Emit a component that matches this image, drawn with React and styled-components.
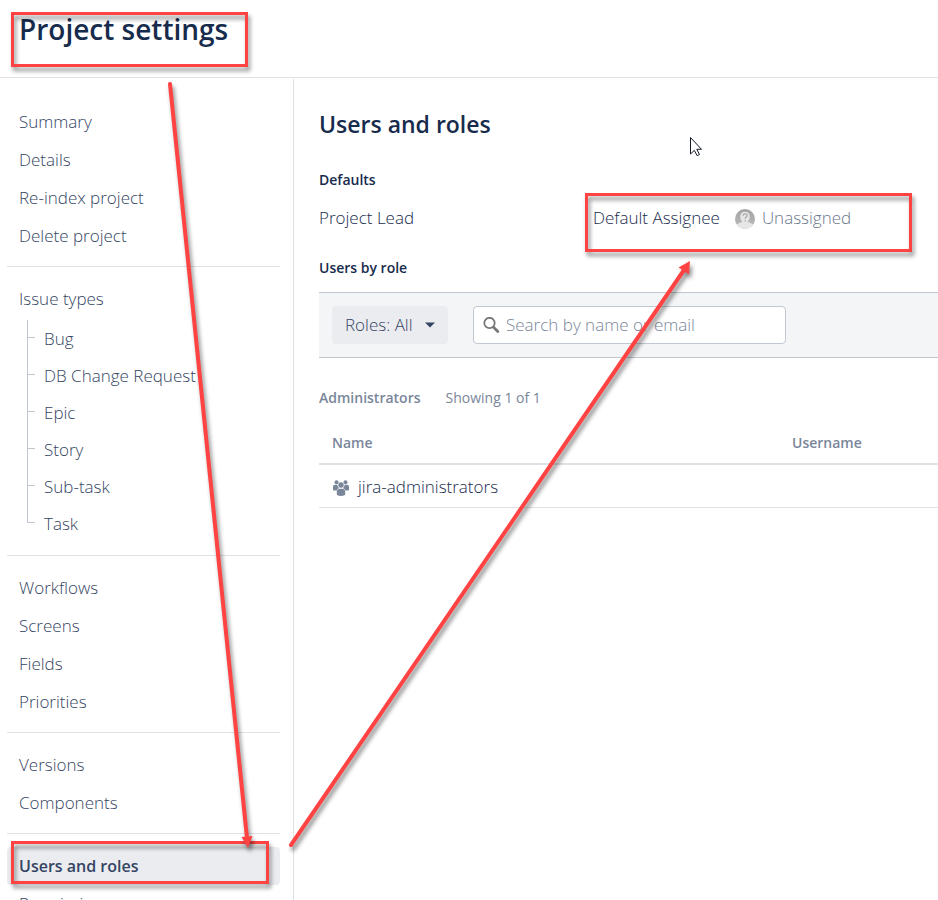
import React from "react";
import styled, { createGlobalStyle } from "styled-components";

const GlobalStyle = createGlobalStyle`
  * {
    box-sizing: border-box;
  }

  body {
    margin: 0;
    background: #fff;
    color: #172b4d;
    font-family: "Open Sans", "Noto Sans", sans-serif;
    font-size: 17px;
    font-weight: 300;
    line-height: 24px;
  }

  ul {
    list-style: none;
    margin: 0;
    padding: 0;
  }
`;

const Page = styled.div`
  display: flex;
  flex-direction: column;
  height: 100vh;
  overflow: hidden;
  position: relative;
`;

const Header = styled.header`
  flex: none;
  height: 78px;
  padding: 9px 19px;
  border-bottom: 1px solid #dfe1e6;
`;

const PageTitle = styled.h1`
  margin: 0;
  font-size: 28px;
  line-height: 40px;
  font-weight: 600;
`;

const Body = styled.div`
  display: flex;
  flex: 1;
  min-height: 0;
  margin-top: 1px;
`;

const Sidebar = styled.nav`
  flex: none;
  width: 294px;
  padding: 11px 13px 0 7px;
  border-right: 1px solid #dfe1e6;
  overflow: hidden;
`;

const NavGroup = styled.ul`
  padding: 13px 0 11px;

  & + & {
    border-top: 1px solid #dfe1e6;
  }
`;

const NavLink = styled.a`
  display: block;
  padding: 0 12px;
  border-radius: 4px;
  line-height: ${(props) => (props.$nested ? "37px" : "38px")};
  color: #344563;
  text-decoration: none;
  white-space: nowrap;
  font-size: ${(props) => (props.$active ? "16px" : "17px")};
  font-weight: ${(props) => (props.$active ? 600 : 300)};
  background: ${(props) => (props.$active ? "#ebecf0" : "transparent")};
`;

const Tree = styled.ul`
  padding: 2px 0 2px 20px;
`;

const TreeItem = styled.li`
  display: flex;
  align-items: flex-start;
  border-left: 1px solid #c1c7d0;

  &::before {
    content: "";
    width: 7px;
    height: 17px;
    margin-left: -1px;
    border-left: 1px solid #c1c7d0;
    border-bottom: 1px solid #c1c7d0;
  }

  &:last-child {
    border-left-color: transparent;
  }

  a {
    padding: 0 9px;
  }
`;

const Main = styled.main`
  flex: 1;
  min-width: 0;
  padding: 29px 0 0 25px;
`;

const Title = styled.h2`
  margin: 0 0 28px;
  font-size: 23px;
  line-height: 32px;
  font-weight: 600;
`;

const SectionTitle = styled.h3`
  margin: 0;
  font-size: 14px;
  line-height: 24px;
  font-weight: 600;
`;

const Defaults = styled.div`
  display: grid;
  grid-template-columns: 274px 1fr;
  padding: 14px 0 26px;
`;

const Assignee = styled.div`
  display: flex;
  align-items: center;
  gap: 15px;
`;

const Unassigned = styled.span`
  display: flex;
  align-items: center;
  gap: 7px;
  color: #6b778c;
`;

const Toolbar = styled.div`
  display: flex;
  align-items: center;
  gap: 25px;
  height: 66px;
  margin-top: 12px;
  padding: 0 13px;
  background: #f4f5f7;
  border-top: 1px solid #c1c7d0;
  border-bottom: 1px solid #c1c7d0;
`;

const RolesButton = styled.button`
  display: flex;
  align-items: center;
  justify-content: space-between;
  width: 116px;
  height: 38px;
  padding: 0 13px;
  border: 0;
  border-radius: 4px;
  background: #ebecf0;
  color: #344563;
  font: inherit;
  white-space: nowrap;
`;

const SearchBox = styled.label`
  display: flex;
  align-items: center;
  gap: 6px;
  width: 313px;
  height: 38px;
  padding: 0 9px;
  background: #fff;
  border: 1px solid #c1c7d0;
  border-radius: 4px;
`;

const SearchInput = styled.input`
  flex: 1;
  min-width: 0;
  padding: 0;
  border: 0;
  outline: 0;
  background: transparent;
  font: inherit;
  color: #172b4d;

  &::placeholder {
    color: #7a869a;
    opacity: 1;
  }
`;

const RoleHeading = styled.div`
  display: flex;
  gap: 25px;
  margin-top: 28px;
  font-size: 14px;
  font-weight: 400;
  color: #7a869a;
`;

const RoleName = styled.h4`
  margin: 0;
  font-size: 14px;
  font-weight: 600;
`;

const Table = styled.table`
  width: 100%;
  margin-top: 21px;
  border-collapse: collapse;
  table-layout: fixed;
`;

const Th = styled.th`
  width: ${(props) => props.$width || "auto"};
  padding: 0 13px 8px;
  border-bottom: 2px solid #dfe1e6;
  color: #7a869a;
  font-size: 14px;
  font-weight: 600;
  text-align: left;
`;

const Td = styled.td`
  height: 43px;
  padding: 2px 13px 0;
  border-bottom: 1px solid #dfe1e6;
`;

const GroupName = styled.span`
  display: flex;
  align-items: center;
  gap: 8px;
`;

const Annotations = styled.svg`
  position: absolute;
  top: 0;
  left: 0;
  pointer-events: none;
  overflow: visible;

  g {
    filter: drop-shadow(2px 4px 2px rgba(0, 0, 0, 0.45));
  }
`;

const navGroups = [
  { items: ["Summary", "Details", "Re-index project", "Delete project"] },
  {
    items: ["Issue types"],
    children: ["Bug", "DB Change Request", "Epic", "Story", "Sub-task", "Task"],
  },
  { items: ["Workflows", "Screens", "Fields", "Priorities"] },
  { items: ["Versions", "Components"] },
  { items: ["Users and roles", "Permissions"] },
];

const CaretIcon = () => (
  <svg width="10" height="6" viewBox="0 0 10 6" aria-hidden="true">
    <path d="M0 0.5h10L5 5.5z" fill="#344563" />
  </svg>
);

const SearchIcon = () => (
  <svg width="17" height="17" viewBox="0 0 17 17" fill="none" aria-hidden="true">
    <circle cx="6.5" cy="6" r="5.2" stroke="#777" strokeWidth="1.8" />
    <path d="M10.6 10.2l4.2 4.2" stroke="#777" strokeWidth="2.8" strokeLinecap="round" />
  </svg>
);

const AvatarIcon = () => (
  <svg width="20" height="22" viewBox="0 -2 20 22" aria-hidden="true">
    <defs>
      <linearGradient id="avatarBg" x1="0" y1="0" x2="0" y2="1">
        <stop offset="0" stopColor="#a2a2a2" />
        <stop offset="1" stopColor="#bdbdbd" />
      </linearGradient>
      <clipPath id="avatarClip">
        <circle cx="10" cy="10" r="10" />
      </clipPath>
    </defs>
    <g clipPath="url(#avatarClip)">
      <rect width="20" height="20" fill="url(#avatarBg)" />
      <path
        d="M10 2.8c3 0 4.8 2 4.8 4.8 0 2-.8 3.8-2 5 .3 1.3 5.2 1.2 5.7 4.4V20H1.5v-3c.5-3.2 5.4-3.1 5.7-4.4-1.2-1.2-2-3-2-5 0-2.8 1.8-4.8 4.8-4.8z"
        fill="#e6e6e6"
      />
      <path
        d="M8 6.8c0-2.6 4.2-2.6 4.2-.2 0 1.5-2 1.5-2 3.2"
        fill="none"
        stroke="#a9a9a9"
        strokeWidth="1.3"
      />
      <circle cx="10.2" cy="11.8" r="0.8" fill="#a9a9a9" />
    </g>
  </svg>
);

const GroupIcon = () => (
  <svg width="18" height="20" viewBox="0 -3 18 20" fill="#7a869a" aria-hidden="true">
    <circle cx="4.5" cy="2.2" r="2" />
    <circle cx="13.5" cy="2.2" r="2" />
    <path d="M1 9.5V6.7c0-1.3.8-2 2-2h2.4c.2 1.7.9 2.6 1.7 3.4-1.2.5-1.9 1.2-2.2 2.4H2c-.6 0-1-.4-1-1z" />
    <path d="M17 9.5V6.7c0-1.3-.8-2-2-2h-2.4c-.2 1.7-.9 2.6-1.7 3.4 1.2.5 1.9 1.2 2.2 2.4H16c.6 0 1-.4 1-1z" />
    <circle cx="9" cy="5" r="2.7" />
    <path d="M4.8 14.3v-2.5C4.8 10 6 8.7 7.7 8.7h2.6c1.7 0 2.9 1.3 2.9 3.1v2.5c0 1.1-1.8 1.6-4.2 1.6s-4.2-.5-4.2-1.6z" />
  </svg>
);

const Marks = () => (
  <Annotations width="1" height="1" aria-hidden="true">
    <g fill="none" stroke="#ff4343" strokeWidth="3">
      <rect x="12.5" y="13.5" width="234" height="52" />
      <rect x="586.5" y="194.5" width="324" height="56" />
      <rect x="12.5" y="842.5" width="255" height="40" />
    </g>
    <g fill="#ff4343" stroke="#ff4343">
      <path d="M170 84L247 838" strokeWidth="4" strokeLinecap="round" />
      <path d="M241.5 837l11-1-4.5 12z" stroke="none" />
      <path d="M291 845L684 270" strokeWidth="4" strokeLinecap="round" />
      <path d="M678.5 267.5L690 261l-1 13.5z" stroke="none" />
    </g>
    <path
      d="M690.5 137.5v16.5l3.8-3.6 2.9 5.3 2.3-1.2-2.7-5.2h4.7z"
      fill="#fff"
      stroke="#111827"
    />
  </Annotations>
);

const Navigation = () => (
  <Sidebar aria-label="Project settings">
    {navGroups.map((group) => (
      <NavGroup key={group.items[0]}>
        {group.items.map((item) => (
          <li key={item}>
            <NavLink href="#" $active={item === "Users and roles"}>
              {item}
            </NavLink>
            {group.children && (
              <Tree>
                {group.children.map((child) => (
                  <TreeItem key={child}>
                    <NavLink href="#" $nested>
                      {child}
                    </NavLink>
                  </TreeItem>
                ))}
              </Tree>
            )}
          </li>
        ))}
      </NavGroup>
    ))}
  </Sidebar>
);

export default function App() {
  return (
    <Page>
      <GlobalStyle />
      <Header>
        <PageTitle>Project settings</PageTitle>
      </Header>
      <Body>
        <Navigation />
        <Main>
          <Title>Users and roles</Title>
          <SectionTitle>Defaults</SectionTitle>
          <Defaults>
            <span>Project Lead</span>
            <Assignee>
              <span>Default Assignee</span>
              <Unassigned>
                <AvatarIcon />
                Unassigned
              </Unassigned>
            </Assignee>
          </Defaults>
          <SectionTitle>Users by role</SectionTitle>
          <Toolbar>
            <RolesButton type="button">
              Roles: All
              <CaretIcon />
            </RolesButton>
            <SearchBox>
              <SearchIcon />
              <SearchInput
                type="text"
                placeholder="Search by name or email"
                aria-label="Search by name or email"
              />
            </SearchBox>
          </Toolbar>
          <RoleHeading>
            <RoleName>Administrators</RoleName>
            <span>Showing 1 of 1</span>
          </RoleHeading>
          <Table>
            <thead>
              <tr>
                <Th $width="460px">Name</Th>
                <Th>Username</Th>
              </tr>
            </thead>
            <tbody>
              <tr>
                <Td>
                  <GroupName>
                    <GroupIcon />
                    jira-administrators
                  </GroupName>
                </Td>
                <Td />
              </tr>
            </tbody>
          </Table>
        </Main>
      </Body>
      <Marks />
    </Page>
  );
}
